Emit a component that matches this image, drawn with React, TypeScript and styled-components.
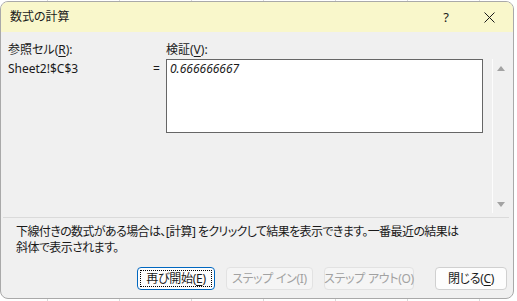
import styled, { createGlobalStyle } from 'styled-components';

const GlobalStyle = createGlobalStyle`
  html, body {
    margin: 0;
    padding: 0;
  }
  body {
    width: 517px;
    height: 301px;
    overflow: hidden;
    background-color: #ffffff;
    background-image: repeating-linear-gradient(
      to right,
      transparent 0,
      transparent 47px,
      #d9d9d9 47px,
      #d9d9d9 48px,
      transparent 48px,
      transparent 72px
    );
    font-family: 'Noto Sans', 'Noto Sans CJK JP', sans-serif;
    font-feature-settings: 'palt';
    font-size: 12px;
    color: #1a1a1a;
  }
`;

const Dialog = styled.div`
  box-sizing: border-box;
  width: 514px;
  margin-top: 1px;
  border: 1px solid #a9a9a9;
  border-radius: 8px;
  overflow: hidden;
  background: #f0f0f0;
  display: flex;
  flex-direction: column;
`;

const TitleBar = styled.div`
  height: 30px;
  display: flex;
  align-items: center;
  justify-content: space-between;
  padding-left: 9px;
  background: #f9f7cb;
`;

const Title = styled.span`
  font-size: 12px;
  line-height: 16px;
`;

const TitleControls = styled.div`
  display: flex;
  height: 100%;
`;

const TitleButton = styled.div<{ $w: number }>`
  width: ${(p) => p.$w}px;
  height: 100%;
  display: flex;
  align-items: center;
  justify-content: center;
  font-size: 13px;
`;

const Upper = styled.div`
  box-sizing: border-box;
  height: 185px;
  padding: 10px 5px 4px 7px;
  display: grid;
  grid-template-columns: 143px 15px 317px 16px;
  grid-template-rows: 16px 1fr;
  row-gap: 1px;
`;

const Label = styled.div<{ $col: number }>`
  grid-column: ${(p) => p.$col};
  grid-row: 1;
  line-height: 16px;
`;

const Value = styled.div<{ $col: number }>`
  grid-column: ${(p) => p.$col};
  grid-row: 2;
  line-height: 16px;
  padding-top: 2px;
`;

const Equals = styled(Value)`
  padding-left: 2px;
`;

const ResultBox = styled.div`
  grid-column: 3;
  grid-row: 2;
  box-sizing: border-box;
  height: 74px;
  border: 1px solid #666666;
  background: #ffffff;
  padding: 1px 3px;
  line-height: 16px;
  font-style: italic;
`;

const ScrollBar = styled.div`
  grid-column: 4;
  grid-row: 2;
  margin-left: 9px;
  width: 16px;
  border-left: 1px solid #fcfcfc;
  display: flex;
  flex-direction: column;
  justify-content: space-between;
  align-items: center;
  padding: 7px 0 6px;
`;

const Arrow = styled.div<{ $down?: boolean }>`
  width: 0;
  height: 0;
  border-left: 4px solid transparent;
  border-right: 4px solid transparent;
  ${(p) =>
    p.$down
      ? 'border-top: 5px solid #a3a3a3;'
      : 'border-bottom: 5px solid #a3a3a3;'}
`;

const Divider = styled.div`
  height: 1px;
  margin: 0 4px 0 2px;
  background: #dadada;
`;

const Footer = styled.div`
  padding: 6px 6px 8px 15px;
  display: flex;
  flex-direction: column;
`;

const Note = styled.p`
  margin: 0;
  line-height: 16px;
  letter-spacing: -0.6px;
  white-space: nowrap;
`;

const Buttons = styled.div`
  margin-top: 11px;
  display: flex;
  justify-content: flex-end;
  gap: 11px;
`;

const Button = styled.div<{ $w: number; $disabled?: boolean; $focused?: boolean; $gap?: number }>`
  position: relative;
  box-sizing: border-box;
  width: ${(p) => p.$w}px;
  height: 23px;
  margin-left: ${(p) => p.$gap ?? 0}px;
  display: flex;
  align-items: center;
  justify-content: center;
  white-space: nowrap;
  letter-spacing: -0.3px;
  border-radius: 4px;
  border: 1px solid
    ${(p) => (p.$focused ? '#0067c0' : p.$disabled ? '#e2e2e2' : '#d0d0d0')};
  background: ${(p) => (p.$disabled ? '#f5f5f5' : '#fdfdfd')};
  color: ${(p) => (p.$disabled ? '#a2a2a2' : '#1a1a1a')};
  line-height: 16px;

  ${(p) =>
    p.$focused &&
    `
    &::after {
      content: '';
      position: absolute;
      inset: 2px;
      border: 1px dotted #000;
    }
  `}
`;

const Key = styled.u`
  text-decoration-thickness: 1px;
  text-underline-offset: 2px;
`;

function CloseIcon() {
  return (
    <svg width="11" height="11" viewBox="0 0 11 11">
      <path d="M0.5 0.5 L10.5 10.5 M10.5 0.5 L0.5 10.5" stroke="#1a1a1a" strokeWidth="1" />
    </svg>
  );
}

export default function App() {
  return (
    <>
      <GlobalStyle />
      <Dialog>
        <TitleBar>
          <Title>数式の計算</Title>
          <TitleControls>
            <TitleButton $w={38}>?</TitleButton>
            <TitleButton $w={48}>
              <CloseIcon />
            </TitleButton>
          </TitleControls>
        </TitleBar>
        <Upper>
          <Label $col={1}>
            参照セル(<Key>R</Key>):
          </Label>
          <Label $col={3}>
            検証(<Key>V</Key>):
          </Label>
          <Value $col={1}>Sheet2!$C$3</Value>
          <Equals $col={2}>=</Equals>
          <ResultBox>0.666666667</ResultBox>
          <ScrollBar>
            <Arrow />
            <Arrow $down />
          </ScrollBar>
        </Upper>
        <Divider />
        <Footer>
          <Note>
            下線付きの数式がある場合は、[計算] をクリックして結果を表示できます。一番最近の結果は
            <br />
            斜体で表示されます。
          </Note>
          <Buttons>
            <Button $w={78} $focused>
              再び開始(<Key>E</Key>)
            </Button>
            <Button $w={87} $disabled>
              ステップ イン(I)
            </Button>
            <Button $w={90} $disabled>
              ステップ アウト(O)
            </Button>
            <Button $w={72} $gap={10}>
              閉じる(<Key>C</Key>)
            </Button>
          </Buttons>
        </Footer>
      </Dialog>
    </>
  );
}
